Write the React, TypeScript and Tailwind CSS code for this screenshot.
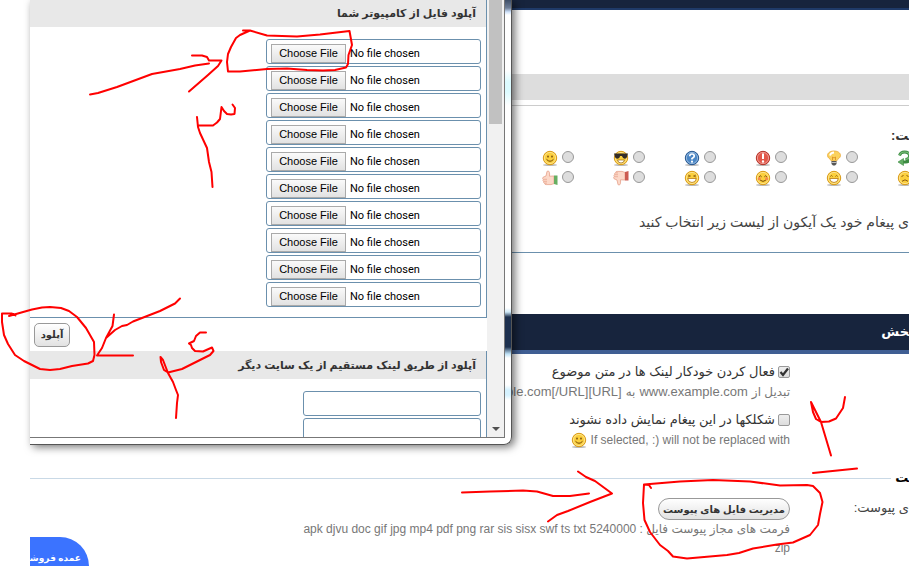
import type { ReactNode } from 'react'

const fileRows = [1, 2, 3, 4, 5, 6, 7, 8, 9, 10]

function Coin({ fill = '#fbcf3c', edge = '#d99a17', children }: { fill?: string; edge?: string; children: ReactNode }) {
  return (
    <svg viewBox="0 0 16 16" className="size-4 shrink-0" aria-hidden="true">
      <ellipse cx="8" cy="15" rx="7" ry="1" fill="#bbb" />
      <circle cx="8" cy="8" r="6.7" fill={fill} stroke={edge} strokeWidth="1" />
      <circle cx="8" cy="8" r="5.6" fill="none" stroke="#fff" strokeOpacity=".45" strokeWidth=".9" />
      {children}
    </svg>
  )
}

function Smile() {
  return (
    <Coin>
      <ellipse cx="6" cy="6.6" rx=".8" ry="1.1" fill="#74480a" />
      <ellipse cx="10" cy="6.6" rx=".8" ry="1.1" fill="#74480a" />
      <path d="M4.5 9.3Q8 13.2 11.5 9.3" fill="none" stroke="#74480a" strokeWidth="1" />
    </Coin>
  )
}

function Cool() {
  return (
    <Coin>
      <path d="M1 3.500h14l-1 3.500q-.5 1.700-2.300 1.700T8.900 6H7.100Q6.700 8.700 4.500 8.700T2 7z" fill="#332d29" />
      <path d="M4.500 10h7q-.7 3-3.500 3t-3.500-3z" fill="#fff" stroke="#98640f" strokeWidth=".7" />
    </Coin>
  )
}

function Grin({ laugh = false }: { laugh?: boolean }) {
  return (
    <Coin>
      {laugh ? (
        <path d="M4 5l2.500 1L4 7M12 5L9.500 6l2.500 1" fill="none" stroke="#8a5a10" strokeWidth=".8" />
      ) : (
        <path d="M4.300 6.500q1.200-2 2.300 0M9.400 6.500q1.200-2 2.300 0" fill="none" stroke="#8a5a10" strokeWidth=".9" />
      )}
      <path d="M3.700 8.500h8.600q-.5 4-4.300 4t-4.300-4z" fill="#fff" stroke="#b67a14" strokeWidth=".8" />
    </Coin>
  )
}

function Blush() {
  return (
    <Coin>
      <circle cx="4.300" cy="8.700" r="1.600" fill="#f58d4b" />
      <circle cx="11.700" cy="8.700" r="1.600" fill="#f58d4b" />
      <path d="M4.200 6.800q1.200-2 2.400 0M9.400 6.800q1.200-2 2.400 0M5.200 10.200q2.800 2.400 5.600 0" fill="none" stroke="#74480a" />
    </Coin>
  )
}

function Sad() {
  return (
    <Coin>
      <path d="M4.500 6.500l2-1M11.500 6.500l-2-1M5 11.300q3-3 6 0" fill="none" stroke="#8a5a10" />
    </Coin>
  )
}

function Question() {
  return (
    <Coin fill="#4a86c5" edge="#27578f">
      <path d="M5.700 6.300Q5.800 4 8 4t2.300 2.100Q10.300 7.500 8 8.500v1" fill="none" stroke="#fff" strokeWidth="1.700" />
      <circle cx="8" cy="11.700" r="1.100" fill="#fff" />
    </Coin>
  )
}

function Exclamation() {
  return (
    <Coin fill="#e2574a" edge="#b43328">
      <path d="M8 3.500v5.500" stroke="#fff" strokeWidth="2" />
      <circle cx="8" cy="11.500" r="1.200" fill="#fff" />
    </Coin>
  )
}

function Bulb() {
  return (
    <svg viewBox="0 0 16 16" className="size-4 shrink-0" aria-hidden="true">
      <path d="M8 1c-4 0-6.500 2-6.500 4.500S4.500 9 5.500 11h5c1-2 4-3 4-5.500S12 1 8 1z" fill="#fbd25c" stroke="#e8a73a" strokeWidth=".8" />
      <path d="M4 5.500q.8-3 4-3" fill="none" stroke="#fff" strokeWidth="1.800" />
      <path d="M6.500 10V7L8 8l1.500-1v3" fill="none" stroke="#d98b1c" strokeWidth=".8" />
      <path d="M5.500 11h5v3l-1.500 1.500H7L5.500 14z" fill="#555" />
      <path d="M5.500 12.500h5" stroke="#bbb" />
    </svg>
  )
}

function Thumb({ down = false }: { down?: boolean }) {
  return (
    <svg viewBox="0 0 16 16" className="size-4 shrink-0" aria-hidden="true">
      <g transform={down ? 'matrix(1 0 0 -1 0 16)' : undefined}>
        <path d="M12 6L7.500 6.200Q8 1 6 1 4.500 1 4.700 3L4 6 1 7.300q-1 1.200.3 2-.9 1.300.3 2-.5 1.500 1 1.800 0 1.500 1.500 1.500H9l3-1z" fill="#fcd8c8" stroke="#e6a18a" strokeWidth=".8" />
        <path d="M1.500 9.300H5M1.800 11.300H5M2.800 13.100H5" stroke="#e6a18a" strokeWidth=".7" />
        <path d="M12 5.500h3.500V15L12 14z" fill={down ? '#cc5b50' : '#67ae62'} />
      </g>
    </svg>
  )
}

function Recycle() {
  return (
    <svg viewBox="0 0 16 16" className="size-4 shrink-0" aria-hidden="true">
      <path d="M2.500 5.500Q3.500 2 7.500 2q5 0 5 4 0 3-4 3.500M5.500 12h3.500q4 0 5-4" fill="none" stroke="#3b8a41" strokeWidth="2.800" />
      <path d="M2.500 5.500Q3.500 2 7.500 2q5 0 5 4 0 3-4 3.500" fill="none" stroke="#7cc07c" strokeWidth="1.200" />
      <path d="M6.500 8.500V15.500L1 12z" fill="#62ad62" stroke="#3b8a41" strokeWidth=".6" />
    </svg>
  )
}

const iconRows: { name: string; icon: ReactNode }[][] = [
  [
    { name: 'بازگشت', icon: <Recycle /> },
    { name: 'ایده', icon: <Bulb /> },
    { name: 'هشدار', icon: <Exclamation /> },
    { name: 'سوال', icon: <Question /> },
    { name: 'باحال', icon: <Cool /> },
    { name: 'لبخند', icon: <Smile /> },
  ],
  [
    { name: 'ناراحت', icon: <Sad /> },
    { name: 'نیشخند', icon: <Grin /> },
    { name: 'خجالت', icon: <Blush /> },
    { name: 'خنده', icon: <Grin laugh /> },
    { name: 'مخالف', icon: <Thumb down /> },
    { name: 'موافق', icon: <Thumb /> },
  ],
]

function IconPicker() {
  return (
    <div className="-mr-5 flex flex-col">
      {iconRows.map((row, i) => (
        <div key={i} className="flex h-5">
          {row.map(({ name, icon }) => (
            <label key={name} className="flex w-[71px] shrink-0 gap-1">
              <input
                type="radio"
                name="posticon"
                aria-label={name}
                className="mt-px size-3 shrink-0 appearance-none rounded-full border border-[#999] bg-[#ddd]"
              />
              {icon}
            </label>
          ))}
        </div>
      ))}
    </div>
  )
}

function Option({ id, label, checked = false, children }: { id: string; label: string; checked?: boolean; children: ReactNode }) {
  return (
    <div>
      <div className="flex h-5 items-center gap-[3px]">
        <span className="relative flex">
          <input
            id={id}
            type="checkbox"
            defaultChecked={checked}
            className="peer size-3 appearance-none rounded-xs border border-[#999] bg-linear-to-b from-[#eee] to-[#ddd]"
          />
          <svg viewBox="0 0 12 12" className="pointer-events-none absolute inset-0 hidden size-3 peer-checked:block">
            <path d="M2.500 6l2.500 3L10 2.500" fill="none" stroke="#333" strokeWidth="2.200" />
          </svg>
        </span>
        <label htmlFor={id} className="text-[13px] whitespace-nowrap text-[#333]">{label}</label>
      </div>
      <div className="flex h-5 items-center gap-1 text-[13px] whitespace-nowrap text-[#777]">{children}</div>
    </div>
  )
}

function ForumPage() {
  return (
    <main className="ml-[30px] flex flex-col">
      <div className="h-[10px] border-b-2 border-[#1f3a68] bg-[#17243d]" />
      <div className="mt-16 h-[26px] bg-[#ddd]" />
      <div className="mt-[5px] h-px bg-[#ccc]" />
      <p className="mt-5 h-5 text-[13px] leading-5 font-bold text-[#333]">{'\u200dت:'}</p>
      <div className="mt-1">
        <IconPicker />
      </div>
      <p className="mt-[22px] h-5 text-[14px] leading-5 whitespace-nowrap text-[#444]">
        ی پیغام خود یک آیکون از لیست زیر انتخاب کنید
      </p>
      <div className="mt-5 h-px bg-[#6b90ad]" />
      <h2 className="mt-[61px] h-10 border-b-4 border-[#3f5e93] bg-[#17243d] text-[13px] leading-9 font-bold text-white">
        {'\u200dخش'}
      </h2>

      <div className="mt-2 flex flex-col gap-2 pr-[119px]">
        <Option id="parseurl" label="فعال کردن خودکار لینک ها در متن موضوع" checked>
          <span className="text-[12px]">تبدیل از</span>
          <span dir="ltr">www.example.com</span>
          <span className="text-[12px]">به</span>
          <span dir="ltr">http://www.example.com[/URL][URL]</span>
        </Option>
        <Option id="nosmile" label="شکلکها در این پیغام نمایش داده نشوند">
          <span dir="ltr" className="text-[12px]">If selected, :) will not be replaced with</span>
          <Smile />
        </Option>
      </div>

      <fieldset className="mt-[18px]">
        <legend className="flex w-full items-center gap-1 text-[13px] leading-5 font-bold text-black">
          {'\u200dت'}
          <span className="h-px flex-1 bg-[#c9d9e6]" />
        </legend>
        <div className="mt-[10px] flex">
          <p className="w-[119px] shrink-0 text-[13px] leading-5 text-[#444]">ی پیوست:</p>
          <div className="w-[496px]">
            <button
              type="button"
              className="block h-[22px] rounded-full border border-[#999] bg-linear-to-b from-white to-[#e2e2e2] px-1 text-[10px] font-bold whitespace-nowrap text-[#333]"
            >
              مدیریت فایل های پیوست
            </button>
            <p className="text-[12px] leading-[19px] text-[#777]">
              فرمت های مجاز پیوست فایل :{' '}
              <span>apk djvu doc gif jpg mp4 pdf png rar sis sisx swf ts txt 5240000</span>
              <br />
              zip
            </p>
          </div>
        </div>
      </fieldset>
    </main>
  )
}

function UploadWindow() {
  return (
    <section
      aria-label="مدیریت فایل های پیوست"
      className="absolute top-0 left-[30px] flex h-[445px] w-[482px] rounded-br-lg border-r border-b border-[#555] bg-[linear-gradient(#3f4f68_0px,#6f7f98_8px,#cfe2fa_12px,#fff_15px,#fff_70px,#dcfbff_82px,#dcfbff_92px,#fff_106px,#fff_308px,#cfeaf8_312px,#1d304e_317px,#1d304e_347px,#bfe2f6_354px,#fff_358px,#fff_385px,#d5f2ff_390px,#d5f2ff_395px,#fff_400px)] pr-[6px] pb-[6px] shadow-[3px_2px_9px_rgba(0,0,0,0.55)]"
    >
      <div dir="ltr" className="flex min-w-0 flex-1 overflow-hidden border-r border-b border-[#777] bg-white">
        <div dir="rtl" className="flex min-w-0 flex-1 flex-col">
          <div className="shrink-0 border-r border-b border-[#6b90ad] pb-[10px]">
            <h2 className="h-[27px] bg-[#e8e8e8] px-[10px] text-[11px] leading-[26px] font-bold text-[#333]">
              آپلود فایل از کامپیوتر شما
            </h2>
            <div className="mt-3 flex flex-col gap-[2px] pr-[5px]">
              {fileRows.map((n) => (
                <input
                  key={n}
                  dir="ltr"
                  type="file"
                  aria-label={`فایل ${n}`}
                  className="h-[25px] w-[215px] rounded-[3px] border border-[#6b90ad] bg-white px-1 pt-1 font-['Roboto'] text-[11px] text-black file:h-[19px] file:w-[75px] file:border file:border-solid file:border-[#aaa] file:bg-linear-to-b file:from-[#fafafa] file:to-[#e2e2e2] file:p-0 file:font-['Liberation_Sans'] file:text-[11px]"
                />
              ))}
            </div>
          </div>
          <div className="flex h-[33px] shrink-0 items-center justify-end px-1">
            <button
              type="button"
              className="h-6 w-9 rounded-[5px] border border-[#999] bg-linear-to-b from-white to-[#e2e2e2] text-[10px] font-bold text-[#333]"
            >
              آپلود
            </button>
          </div>
          <div className="flex-1 border-r border-[#6b90ad]">
            <h2 className="h-7 bg-[#e8e8e8] px-[10px] text-[11px] leading-7 font-bold text-[#333]">
              آپلود از طریق لینک مستقیم از یک سایت دیگر
            </h2>
            <div className="mt-3 flex flex-col gap-[2px] pr-[5px]">
              <input type="text" aria-label="لینک 1" className="h-[25px] w-[178px] rounded-[3px] border border-[#6b90ad]" />
              <input type="text" aria-label="لینک 2" className="h-[25px] w-[178px] rounded-[3px] border border-[#6b90ad]" />
            </div>
          </div>
        </div>
        <div className="flex w-[17px] shrink-0 flex-col items-center justify-between bg-[#f1f1f1] pb-1">
          <div className="h-[124px] w-[13px] bg-[#c1c1c1]" />
          <svg viewBox="0 0 8 8" className="size-2" aria-hidden="true">
            <path d="M0 2h8L4 6z" fill="#505050" />
          </svg>
        </div>
      </div>
    </section>
  )
}

// Freehand red marks drawn over the page
function PenMarks() {
  return (
    <svg
      viewBox="0 0 909 566"
      className="pointer-events-none absolute top-0 left-0 h-[566px] w-[909px]"
      fill="none"
      stroke="#f00"
      strokeWidth="2"
      strokeLinecap="round"
      strokeLinejoin="round"
      aria-hidden="true"
    >
      <path d="M90 94.500L98 93 117 87 152 74 180 69 195 65.500 209 63.500" />
      <path d="M192 55.500H202L207 57 209 60.500H221.500L218 66 208 75 189 91.500" />
      <path d="M243 30.500H250L240 35 236 38 231 47 228 54 227 62 228 71.500 240 71.500 267 69 287 68.500 307 70 323 70.500 335 70 346 67.500 348 64 348.500 55 352 45 349.500 31 320 34.500 297 36.500 267 35.500 250 30.500" />
      <path d="M197 117L198 127 200 133 207 148 209 162 211.500 172 212.500 187M198 125.500H213L217 122.500 220 119 221.500 107 224 111 227 114 231 114.500 234.500 114 235 108 232.500 104.500" />
      <path d="M15.500 315.500L12 313.500H2L2 322 4 335 8 344 15 355 24 361 40 369 50 370 60 369 72 366 88 363.500 93 361 94.500 355 94 342 86 328 77 317 69 311 61 308 50 307 42 307.500 32 309.500 9 316" />
      <path d="M180 298.500L175 303.500 160 311 133 321.500 127 325 122 326 115 330 106 338 102 348 97 355.500H133M114 314.500L112.500 326 106 338" />
      <path d="M206 332.500H200L196 336 194 341 189 343.500 191 345 192 348 195 351 203 351.500 212 347.500 213.500 351 210 355 190 365 182 369 168 372.500 164 370 161 362 160.500 357 163 360 168 373 173 382 176 390 178 395 177 403 176 418" />
      <path d="M462 492.500L490 491.500 523 490.500 537 491.500 553 496 570 496 589 493.500M578 471.500L586 477 595 481 612 493.500 590 502 568 511 557 515 548 521.500" />
      <path d="M651 488L649 485 644 484.500 643 503 644.500 520 650 532 660 545 668 551 673 556.500 687 558.500 727 555 739 553 753 548.500 777 544.500 793 542.500 810 535 818 525 820 514 822.500 502 820 493 813 486 807 485 780 485.500 750 481.500 713 480 680 481.500 644 484.500" />
      <path d="M831 455.500L821 422 811 402 813 412 816 419 821 422 829 421.500 836 418.500 843 408 845 397M813 473L857 468.500" />
    </svg>
  )
}

export default function App() {
  return (
    <div dir="rtl" className="relative min-h-screen overflow-hidden bg-white font-['Liberation_Sans','DejaVu_Sans',sans-serif]">
      <ForumPage />
      <div className="absolute bottom-0 left-[30px] h-[29px] w-[59px] overflow-hidden rounded-tr-[30px] bg-[#3b73ff] pt-[13px] pr-2 text-[9px] leading-4 font-bold whitespace-nowrap text-white">
        {'عمده فروش\u200d'}
      </div>
      <UploadWindow />
      <PenMarks />
    </div>
  )
}
